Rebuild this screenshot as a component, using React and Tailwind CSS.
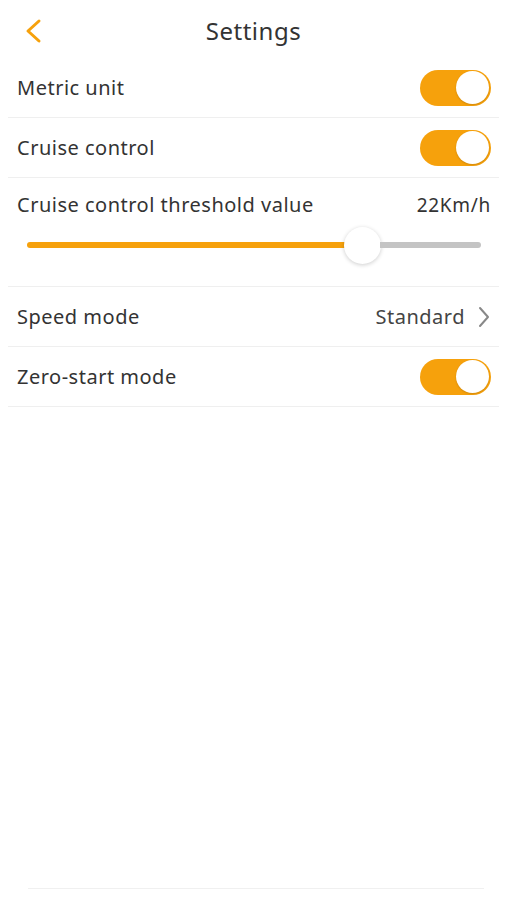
import React from "react";

function Toggle() {
  return (
    <div className="w-[71px] h-[36px] rounded-full bg-[#f6a10c] flex items-center justify-end pr-[2px]">
      <div className="w-[33px] h-[33px] rounded-full bg-white shadow-[0_1px_2px_rgba(0,0,0,0.15)]" />
    </div>
  );
}

function Row({ label, right }) {
  return (
    <div className="h-[60px] flex items-center justify-between pl-[9px] pr-[8px] border-b border-[#efefef]">
      <span className="text-[20px] tracking-[0.5px] text-[#333]">{label}</span>
      {right}
    </div>
  );
}

export default function App() {
  return (
    <div className="w-[507px] h-[900px] bg-white relative" style={{ fontFamily: '"Noto Sans", "Open Sans", sans-serif' }}>
      <div className="h-[58px] flex items-center justify-center relative">
        <svg className="absolute left-[22px] top-[18px]" width="22" height="26" viewBox="0 0 22 26">
          <path d="M17 3 L6 13 L17 23" fill="none" stroke="#f6a10c" strokeWidth="3" strokeLinecap="round" strokeLinejoin="round" />
        </svg>
        <span className="text-[24px] tracking-[0.5px] text-[#333] mt-[3px]">Settings</span>
      </div>
      <div className="px-[8px]">
        <Row label="Metric unit" right={<Toggle />} />
        <Row label="Cruise control" right={<Toggle />} />
        <div className="h-[109px] border-b border-[#efefef] pl-[9px] pr-[8px] pt-[12px]">
          <div className="flex justify-between items-center">
            <span className="text-[20px] tracking-[0.5px] text-[#333]">Cruise control threshold value</span>
            <span className="text-[19px] tracking-[0.7px] text-[#333]">22Km/h</span>
          </div>
          <div className="mt-[6px] ml-[10px] mr-[10px] h-[38px] flex items-center">
            <div className="h-[6px] w-[318px] bg-[#f6a10c] rounded-l-full" />
            <div className="w-[37px] h-[37px] rounded-full bg-white shadow-[0_1px_4px_rgba(0,0,0,0.2)] -mx-[1px] shrink-0" />
            <div className="h-[6px] flex-1 bg-[#c4c4c4] rounded-r-full" />
          </div>
        </div>
        <Row
          label="Speed mode"
          right={
            <div className="flex items-center gap-[12px]">
              <span className="text-[20px] tracking-[0.5px] text-[#444]">Standard</span>
              <svg width="14" height="24" viewBox="0 0 14 24">
                <path d="M3 3 L11 12 L3 21" fill="none" stroke="#888" strokeWidth="2" strokeLinecap="round" strokeLinejoin="round" />
              </svg>
            </div>
          }
        />
        <Row label="Zero-start mode" right={<Toggle />} />
      </div>
      <div className="absolute left-[28px] right-[23px] top-[888px] h-px bg-[#f0f0f0]" />
    </div>
  );
}
